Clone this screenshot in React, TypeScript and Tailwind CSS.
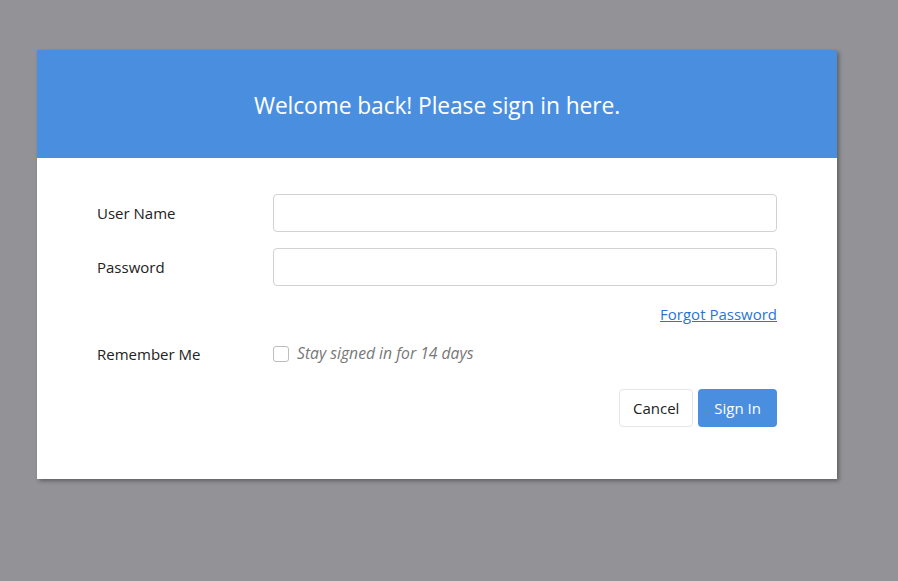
import React from 'react';

export default function App() {
  return (
    <div
      className="min-h-screen w-full bg-[#939397] pt-[50px] pl-[37px]"
      style={{ fontFamily: '"Open Sans", "Noto Sans", sans-serif' }}
    >
      <div className="w-[800px] bg-white shadow-[2px_2px_4px_rgba(0,0,0,0.35)]">
        {/* header */}
        <div className="h-[108px] bg-[#4a8fdf] flex items-center justify-center pt-[4px]">
          <h1 className="text-white text-[22.8px] tracking-[-0.1px]">Welcome back! Please sign in here.</h1>
        </div>

        {/* form */}
        <div className="px-[60px] pt-[36px] pb-[52px] text-[15px] text-[#222]">
          <div className="flex items-center h-[38px]">
            <label className="w-[176px]">User Name</label>
            <input className="flex-1 h-[38px] border border-[#d2d2d2] rounded-[4px] px-3 outline-none" />
          </div>
          <div className="flex items-center h-[38px] mt-[16px]">
            <label className="w-[176px]">Password</label>
            <input type="password" className="flex-1 h-[38px] border border-[#d2d2d2] rounded-[4px] px-3 outline-none" />
          </div>
          <div className="flex justify-end mt-[18px]">
            <a href="#" className="text-[#2a75d4] underline leading-[20px]">Forgot Password</a>
          </div>
          <div className="flex items-center mt-[20px] h-[20px]">
            <span className="w-[176px]">Remember Me</span>
            <label className="flex items-center gap-[8px] text-[#777] italic text-[15.7px]">
              <span className="w-[16px] h-[16px] border border-[#bdbdbd] rounded-[3px] bg-white" />
              Stay signed in for 14 days
            </label>
          </div>
          <div className="flex justify-end gap-[5px] mt-[25px]">
            <button className="h-[38px] px-[13px] border border-[#e5e5e5] rounded-[4px] bg-white text-[#222]">Cancel</button>
            <button className="h-[38px] px-[16px] rounded-[4px] bg-[#4a8fdf] text-white">Sign In</button>
          </div>
        </div>
      </div>
    </div>
  );
}
